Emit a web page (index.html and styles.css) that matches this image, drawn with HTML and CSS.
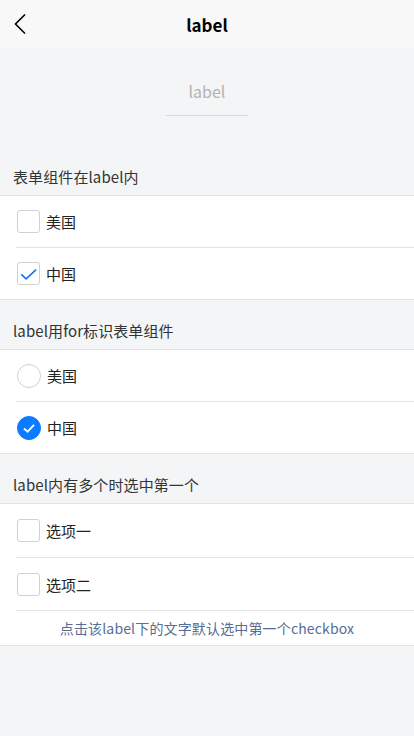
FILE: index.html
```html
<!DOCTYPE html>
<html lang="zh">
<head>
<meta charset="utf-8">
<title>label</title>
<link rel="stylesheet" href="styles.css">
</head>
<body>
<div class="nav">
  <svg class="back" width="14" height="22" viewBox="0 0 14 22"><path d="M12 1.5 L2.5 11 L12 20.5" fill="none" stroke="#000" stroke-width="1.6"/></svg>
  <div class="title">label</div>
</div>
<div class="hero">
  <div class="fake-input">label</div>
</div>

<div class="sec-title">表单组件在label内</div>
<div class="group">
  <div class="row"><span class="box"></span><span class="txt">美国</span></div>
  <div class="row"><span class="box"><svg width="22" height="22" viewBox="0 0 22 22"><path d="M3.5 11.5 L8.5 16 L19 6.5" fill="none" stroke="#1677f5" stroke-width="1.8"/></svg></span><span class="txt">中国</span></div>
</div>

<div class="sec-title">label用for标识表单组件</div>
<div class="group">
  <div class="row"><span class="radio"></span><span class="txt">美国</span></div>
  <div class="row"><span class="radio on"><svg width="24" height="24" viewBox="0 0 24 24"><path d="M6.5 12.5 L10.5 16 L17.5 8.5" fill="none" stroke="#fff" stroke-width="2"/></svg></span><span class="txt">中国</span></div>
</div>

<div class="sec-title">label内有多个时选中第一个</div>
<div class="group">
  <div class="row tall"><span class="box"></span><span class="txt">选项一</span></div>
  <div class="row tall"><span class="box"></span><span class="txt">选项二</span></div>
  <div class="row note">点击该label下的文字默认选中第一个checkbox</div>
</div>
</body>
</html>
```

FILE: styles.css
```css
html, body {
  margin: 0;
  padding: 0;
}
body {
  background: #f4f5f6;
  font-family: "Noto Sans CJK SC", "Noto Sans", sans-serif;
  color: #222;
  width: 414px;
  height: 736px;
}
.nav {
  height: 48px;
  background: #f8f8f8;
  display: flex;
  align-items: center;
  justify-content: center;
  position: relative;
}
.back {
  position: absolute;
  left: 13px;
  top: 13px;
}
.title {
  font-size: 17px;
  font-weight: bold;
  color: #000;
}
.hero {
  height: 98px;
  box-sizing: border-box;
  padding-top: 24px;
  display: flex;
  justify-content: center;
}
.fake-input {
  width: 82px;
  height: 44px;
  box-sizing: border-box;
  border-bottom: 1px solid #d8d8d8;
  text-align: center;
  font-size: 16px;
  line-height: 38px;
  color: #b3b3b3;
}
.sec-title {
  height: 49px;
  box-sizing: border-box;
  padding: 20px 13px 0;
  font-size: 15px;
  line-height: 22px;
  color: #333;
  letter-spacing: 0.1px;
}
.group {
  background: #fff;
  border-top: 1px solid #e3e3e3;
  border-bottom: 1px solid #e3e3e3;
}
.row {
  height: 51px;
  box-sizing: border-box;
  margin-left: 16px;
  padding-left: 1px;
  display: flex;
  align-items: center;
}
.row + .row {
  border-top: 1px solid #e3e3e3;
  height: 52px;
}
.row.tall {
  height: 53px;
}
.row.tall + .row.tall {
  height: 53px;
}
.row.note {
  height: 35px;
  padding: 0 16px 0 0;
  justify-content: center;
  font-size: 14px;
  letter-spacing: 0.15px;
  color: #586c94;
}
.box {
  width: 23px;
  height: 23px;
  box-sizing: border-box;
  border: 1px solid #d1d1d1;
  border-radius: 3px;
  display: flex;
  align-items: center;
  justify-content: center;
}
.radio {
  width: 24px;
  height: 24px;
  box-sizing: border-box;
  border: 1px solid #d1d1d1;
  border-radius: 50%;
  display: flex;
  align-items: center;
  justify-content: center;
}
.radio.on {
  background: #0b7bff;
  border-color: #0b7bff;
}
.txt {
  margin-left: 6px;
  font-size: 15px;
  color: #222;
}
```
